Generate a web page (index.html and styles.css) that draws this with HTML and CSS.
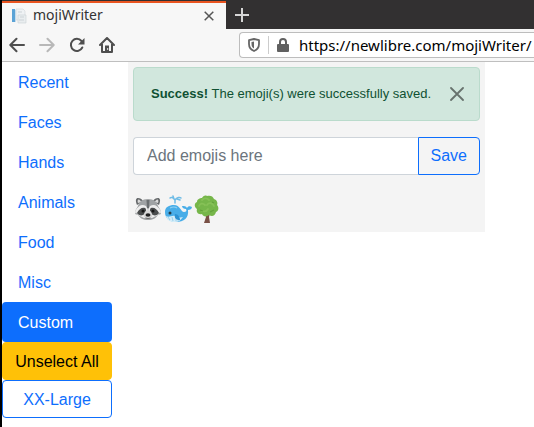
FILE: index.html
```html
<!DOCTYPE html>
<html lang="en">
<head>
    <meta charset="UTF-8">
    <meta name="viewport" content="width=device-width, initial-scale=1.0">
    <title>mojiWriter</title>
    <link rel="stylesheet" href="styles.css">
</head>
<body>
    <header class="browser">
        <div class="tab-strip">
            <div class="tab">
                <svg class="favicon" width="16" height="16" viewBox="0 0 16 16">
                    <path d="M5 1h7l2 2v9H5z" fill="#eff2f4" stroke="#d5dadd" stroke-width=".7"/>
                    <path d="M1 1h3v13H1z" fill="#5ba3d6"/>
                    <path d="M4 2h1v12H4z" fill="#c4dcec"/>
                    <path d="M7 7h8v8H7z" fill="#e9edef" stroke="#cfd5d8" stroke-width=".7"/>
                    <path d="M7 4h4M9 9h4M8 12h5" stroke="#cdd3d7"/>
                </svg>
                <span class="tab-title">mojiWriter</span>
                <button class="icon-button" aria-label="Close tab">
                    <svg width="10" height="10" viewBox="0 0 10 10"><path d="M.7.7l8.6 8.6M9.3.7L.7 9.3" stroke="#555" stroke-width="1.5"/></svg>
                </button>
            </div>
            <button class="icon-button new-tab" aria-label="New tab">
                <svg width="14" height="14" viewBox="0 0 14 14"><path d="M7 0v14M0 7h14" stroke="#d6d6d6" stroke-width="2"/></svg>
            </button>
        </div>
        <div class="toolbar">
            <div class="nav-buttons">
                <button class="icon-button" aria-label="Back">
                    <svg width="16" height="16" viewBox="0 0 16 16" fill="none" stroke="#4f4f4f" stroke-width="2" stroke-linecap="round" stroke-linejoin="round"><path d="M15 8H1.500M7.500 1.800L1.300 8l6.200 6.200"/></svg>
                </button>
                <button class="icon-button" aria-label="Forward" disabled>
                    <svg width="16" height="16" viewBox="0 0 16 16" fill="none" stroke="#b8b8b8" stroke-width="2" stroke-linecap="round" stroke-linejoin="round"><path d="M1 8h13.500M8.500 1.800L14.700 8l-6.200 6.200"/></svg>
                </button>
                <button class="icon-button" aria-label="Reload">
                    <svg width="16" height="16" viewBox="0 0 16 16"><path d="M13.300 10.500A6 6 0 1 1 12.500 4" fill="none" stroke="#4f4f4f" stroke-width="2" stroke-linecap="round"/><path d="M15.500 1v6.500H9z" fill="#4f4f4f"/></svg>
                </button>
                <button class="icon-button" aria-label="Home">
                    <svg width="16" height="16" viewBox="0 0 16 16" fill="none" stroke="#4f4f4f" stroke-width="2" stroke-linecap="round" stroke-linejoin="round"><path d="M1 8l7-7 7 7M3 7v8h10V7"/><path d="M6 8.500h4V15H6z" fill="#4f4f4f" stroke="none"/><path d="M8.700 11.500v1" stroke="#f7f7f7" stroke-width="1"/></svg>
                </button>
            </div>
            <div class="url-bar">
                <svg class="shield" width="12" height="14" viewBox="0 0 12 14"><path d="M6 1L11 2.200V6c0 3.500-2 5.800-5 7C3 11.800 1 9.500 1 6V2.200z" fill="none" stroke="#666" stroke-width="1.800" stroke-linejoin="round"/><path d="M6 3.500v7C4.300 9.500 3.500 8 3.500 6V4z" fill="#666"/></svg>
                <svg class="lock" width="12" height="14" viewBox="0 0 12 14"><path d="M3 7V4a3 3 0 0 1 6 0v3" fill="none" stroke="#606060" stroke-width="2"/><rect y="6" width="12" height="8" rx="1" fill="#606060"/></svg>
                <input class="url" type="text" aria-label="Address" value="https://newlibre.com/mojiWriter/">
            </div>
        </div>
    </header>

    <div class="page">
        <nav class="sidebar">
            <a class="nav-link" href="#recent">Recent</a>
            <a class="nav-link" href="#faces">Faces</a>
            <a class="nav-link" href="#hands">Hands</a>
            <a class="nav-link" href="#animals">Animals</a>
            <a class="nav-link" href="#food">Food</a>
            <a class="nav-link" href="#misc">Misc</a>
            <a class="nav-link active" href="#custom">Custom</a>
            <button class="btn btn-warning">Unselect All</button>
            <button class="btn btn-outline">XX-Large</button>
        </nav>

        <main class="content">
            <div class="alert" role="alert">
                <span><strong>Success!</strong> The emoji(s) were successfully saved.</span>
                <button class="icon-button alert-close" aria-label="Close">
                    <svg width="14" height="14" viewBox="0 0 14 14"><path d="M1 1l12 12M13 1L1 13" stroke="#000" stroke-width="1.800" stroke-linecap="round"/></svg>
                </button>
            </div>
            <div class="input-group">
                <input class="form-control" type="text" placeholder="Add emojis here" aria-label="Add emojis here">
                <button class="btn btn-outline btn-save">Save</button>
            </div>
            <div class="emojis">
                <!-- raccoon -->
                <svg width="28" height="28" viewBox="0 0 28 28">
                    <path d="M3 10C1 5 2 3 4 3c2 0 4 1 5 3zM25 10c2-5 1-7-1-7-2 0-4 1-5 3z" fill="#66696b"/>
                    <path d="M4 8c-1-2 0-4 1-3.500L8 7zM24 8c1-2 0-4-1-3.500L20 7z" fill="#d9d9d9"/>
                    <path d="M14 4c6 0 9 3 10 7l3 5-1 1 1 2-3 1c-2 3-5 5-10 5s-8-2-10-5l-3-1 1-2-1-1 3-5c1-4 4-7 10-7z" fill="#a0a3a5"/>
                    <path d="M12.500 5h3l-.500 8h-2z" fill="#6b6f71"/>
                    <path d="M1 16c4-6 7-7 11-5l2 4 2-4c4-2 7-1 11 5l-3 4-6 3h-8l-6-3z" fill="#eee"/>
                    <path d="M3 18c2-4 5-6 8-5 2 1 1 6-2 7-2 1-5 0-6-2zM25 18c-2-4-5-6-8-5-2 1-1 6 2 7 2 1 5 0 6-2z" fill="#4a4c4d"/>
                    <path d="M14 15c3 0 6 6 3 8-2 1-4 1-6 0-3-2 0-8 3-8z" fill="#d8d8d8"/>
                    <circle cx="9" cy="16" r="1.500" fill="#171717"/><circle cx="19" cy="16" r="1.500" fill="#171717"/>
                    <ellipse cx="14" cy="20" rx="2.500" ry="1.800" fill="#202020"/>
                    <path d="M11.500 23q2.500 1 5 0" fill="none" stroke="#666"/>
                </svg>
                <!-- whale -->
                <svg width="28" height="28" viewBox="0 0 28 28">
                    <path d="M11 8V5M11 5C9 2 7 2 6 3M11 5c2-3 5-3 6-2M10 4L9 1M13 4l3 1" fill="none" stroke="#6fbce6" stroke-width="1.500" stroke-linecap="round"/>
                    <path d="M1 17C1 12 5 10 10 10c6 0 7 7 10 7 2 0 3-1 2-3-2 0-4-1-4-3 2 0 4 0 5 2 1-2 3-2 5-1 0 2-2 3-4 3 1 8-4 12-12 12C5 27 1 23 1 17z" fill="#48ade8"/>
                    <path d="M2 21c3 2 6-1 9 0 3 1 5 2 8 1-2 3-5 5-8 5-5 0-8-2-9-6z" fill="#d4edf8"/>
                    <path d="M4 22l2 3M8 22l1 4M12 22v4M15 23l-1 3" stroke="#8ac8e8" stroke-width=".8"/>
                    <path d="M11 19c3 0 5 3 5 6-4 0-6-2-5-6z" fill="#2c91d2"/>
                    <circle cx="6" cy="18" r="1.500" fill="#263d4a"/>
                    <path d="M6 13q4-2 7 0" fill="none" stroke="#8ed0f2" stroke-width="1.200"/>
                </svg>
                <!-- tree -->
                <svg width="28" height="28" viewBox="0 0 28 28">
                    <path d="M11 16l1 6-2 6h6l-1-6 2-7z" fill="#795046"/>
                    <path d="M13 1c3-1 6 0 7 3 3 1 4 4 3 6 2 2 2 6-1 7-1 4-4 5-7 3-2 2-6 2-7-1-4 1-6-2-5-5-3-2-3-6 0-7 0-3 3-4 5-4 1-2 3-3 5-2z" fill="#76b64a"/>
                    <path d="M8 5c2-2 5-2 7 0M5 11c1-3 4-3 6-1M13 10c2-3 6-2 7 1M8 16c3 1 5 0 6-2" fill="none" stroke="#86c157" stroke-width="1.800" stroke-linecap="round"/>
                    <path d="M6 15l3 1M16 17l4-2M18 7l2 1" stroke="#63a03c" stroke-width="1.200"/>
                </svg>
            </div>
        </main>
    </div>
</body>
</html>
```
FILE: styles.css
```css
* {
    box-sizing: border-box;
}

body {
    margin: 0;
    min-height: 100vh;
    border-left: 2px solid #000;
    background: #fff;
    font-family: "Liberation Sans", Arial, sans-serif;
    font-size: 16px;
    line-height: 24px;
    overflow-x: hidden;
}

button, input {
    font: inherit;
}

.icon-button {
    display: flex;
    align-items: center;
    justify-content: center;
    padding: 0;
    border: none;
    background: none;
}

/* browser window */
.browser {
    background: #f7f7f7;
    border-bottom: 1px solid #bfbfbf;
    font-family: "Noto Sans", "Open Sans", sans-serif;
}

.tab-strip {
    display: flex;
    height: 29px;
    background: #323031;
    border-top: 1px solid #323031;
}

.tab {
    display: flex;
    align-items: center;
    gap: 6px;
    width: 224px;
    padding: 0 12px 0 9px;
    background: #f7f7f7;
    border-top: 2px solid #e95420;
}

.tab-title {
    flex: 1;
    font-size: 14px;
    line-height: 20px;
    padding-bottom: 2px;
    color: #333;
}

.new-tab {
    width: 32px;
}

.toolbar {
    display: flex;
    align-items: center;
    height: 32px;
}

.nav-buttons {
    display: flex;
    gap: 14px;
    padding-left: 7px;
    width: 237px;
    flex-shrink: 0;
}

.url-bar {
    display: flex;
    align-items: center;
    flex: 1;
    height: 26px;
    padding-left: 8px;
    background: #fff;
    border: 1px solid #bdbdbd;
    border-right: none;
    border-radius: 4px 0 0 4px;
}

.shield, .lock {
    flex-shrink: 0;
}

.lock {
    box-sizing: content-box;
    margin-left: 8px;
    padding: 2px 0 2px 8px;
    border-left: 1px solid #ccc;
}

.url {
    flex: 1;
    min-width: 0;
    margin-left: 10px;
    padding: 0;
    border: none;
    outline: none;
    background: none;
    color: #000;
    font-size: 15px;
}

/* page */
.page {
    display: flex;
    align-items: flex-start;
    gap: 16px;
}

.sidebar {
    display: flex;
    flex-direction: column;
    width: 110px;
    flex-shrink: 0;
}

.nav-link {
    padding: 9px 16px 7px;
    border-radius: 4px;
    color: #0d6efd;
    text-decoration: none;
}

.nav-link.active {
    background: #0d6efd;
    color: #fff;
}

.btn {
    padding: 6px 12px;
    border: 1px solid transparent;
    border-radius: 4px;
    white-space: nowrap;
}

.sidebar .btn {
    padding: 7px 12px 5px;
}

.btn-warning {
    background: #ffc107;
    border-color: #ffc107;
    color: #000;
}

.btn-outline {
    background: transparent;
    border-color: #0d6efd;
    color: #0d6efd;
}

.content {
    width: 67.1%;
    padding: 5px;
    background: #f4f4f4;
}

.alert {
    display: flex;
    align-items: center;
    justify-content: space-between;
    margin-bottom: 16px;
    padding: 14px 15px 14px 17px;
    border: 1px solid #badbcc;
    border-radius: 4px;
    background: #d1e7dd;
    color: #0f5132;
    font-size: 13px;
}

.alert-close {
    opacity: 0.5;
}

.input-group {
    display: flex;
    margin-bottom: 20px;
}

.form-control {
    flex: 1;
    min-width: 0;
    padding: 6px 13px;
    border: 1px solid #ced4da;
    border-right: none;
    border-radius: 4px 0 0 4px;
    background: #fff;
}

.form-control::placeholder {
    color: #6c757d;
    opacity: 1;
}

.btn-save {
    border-radius: 0 4px 4px 0;
}

.emojis {
    display: flex;
    gap: 2px;
    padding: 0 1px 4px;
}
```
